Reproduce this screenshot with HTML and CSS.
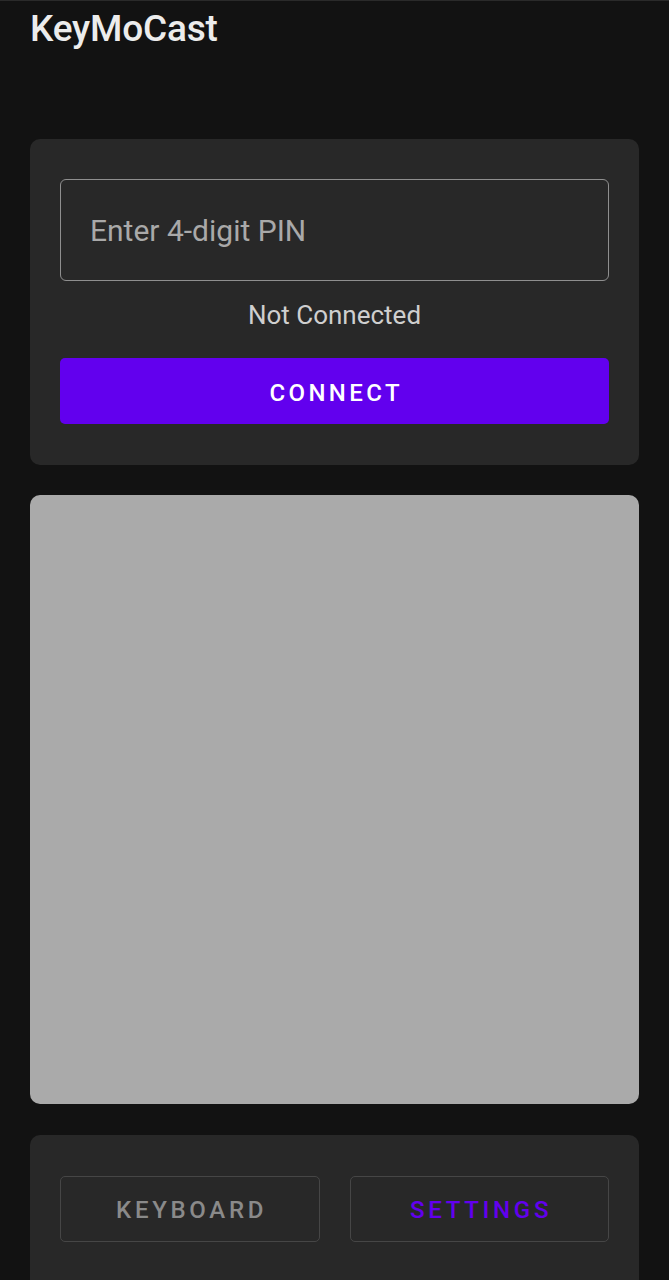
FILE: index.html
```html
<!DOCTYPE html>
<html>
<head>
<meta charset="utf-8">
<link rel="stylesheet" href="styles.css">
</head>
<body>
<div class="app">
  <h1 class="title">KeyMoCast</h1>
  <section class="card connect-card">
    <div class="pin-input">Enter 4-digit PIN</div>
    <div class="status">Not Connected</div>
    <button class="btn-primary">CONNECT</button>
  </section>
  <section class="touchpad"></section>
  <section class="card nav-card">
    <button class="btn-outline keyboard">KEYBOARD</button>
    <button class="btn-outline settings">SETTINGS</button>
  </section>
</div>
</body>
</html>
```
FILE: styles.css
```css
html, body {
  margin: 0;
  padding: 0;
  background: #121212;
  height: 1280px;
  overflow: hidden;
}
body {
  border-top: 1px solid #2a2a2a;
  box-sizing: border-box;
  font-family: Roboto, "Noto Sans", sans-serif;
}
.app {
  padding: 0 30px;
  display: flex;
  flex-direction: column;
}
.title {
  margin: 0;
  padding-top: 7px;
  height: 138px;
  box-sizing: border-box;
  font-size: 37px;
  font-weight: 500;
  color: #ececec;
  line-height: 42px;
  letter-spacing: -0.2px;
}
.card {
  background: #282828;
  border-radius: 10px;
}
.connect-card {
  padding: 40px 30px 41px;
  display: flex;
  flex-direction: column;
  height: 326px;
  box-sizing: border-box;
}
.pin-input {
  height: 102px;
  box-sizing: border-box;
  border: 1.5px solid #8f8f8f;
  border-radius: 6px;
  padding-left: 29px;
  display: flex;
  align-items: center;
  font-size: 30px;
  color: #a9a9a9;
}
.status {
  text-align: center;
  color: #cfcfcf;
  font-size: 26px;
  line-height: 28px;
  margin-top: 20px;
  height: 57px;
}
.btn-primary {
  height: 66px;
  border: none;
  border-radius: 5px;
  background: #6200ee;
  color: #ffffff;
  font-family: Roboto, sans-serif;
  font-weight: 500;
  font-size: 24px;
  letter-spacing: 3.4px;
  padding: 3px 0 0 3.4px;
}
.touchpad {
  margin-top: 30px;
  height: 609px;
  background: #aaaaaa;
  border-radius: 10px;
}
.nav-card {
  margin-top: 31px;
  height: 160px;
  padding: 41px 30px 0;
  box-sizing: border-box;
  display: grid;
  grid-template-columns: 1fr 1fr;
  column-gap: 30px;
  align-items: start;
}
.btn-outline {
  height: 66px;
  background: transparent;
  border: 1.5px solid #464646;
  border-radius: 5px;
  font-family: Roboto, sans-serif;
  font-weight: 500;
  font-size: 24px;
  letter-spacing: 3.7px;
  padding: 2px 0 0 3.7px;
}
.keyboard { color: #8a8a8a; }
.settings { color: #6200ee; }
```
